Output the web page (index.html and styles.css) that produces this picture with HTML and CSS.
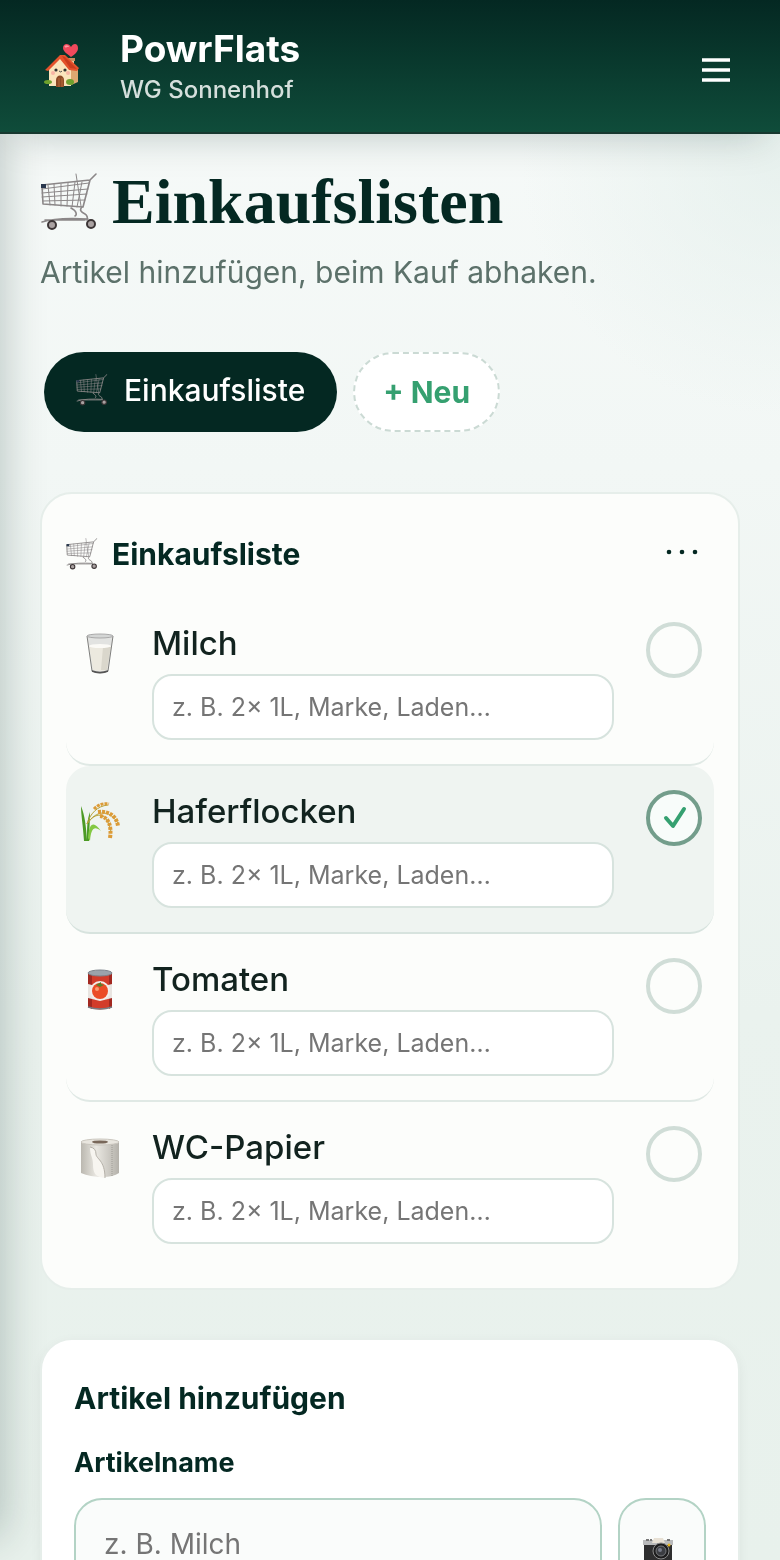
FILE: index.html
```html
<!DOCTYPE html>
<html lang="de">
<head>
    <meta charset="UTF-8">
    <meta name="viewport" content="width=device-width, initial-scale=1.0">
    <title>Einkaufslisten - PowrFlats</title>
    <link rel="stylesheet" href="styles.css">
</head>
<body>
    <svg class="sprite" aria-hidden="true">
        <symbol id="cart" viewBox="0 0 58 58">
            <g fill="none" stroke="#8b8788" stroke-linecap="round" stroke-linejoin="round">
                <path stroke-width="1" d="M2 16L49 10M2 20l46-4M2 24l45-3M3 28l42-1"/>
                <path stroke-width="1" d="M8 12l2 20M14 11l1 21M21 11v22M28 10l-1 23M35 9l-3 25M42 9l-5 25M36 1l5 32"/>
                <path stroke-width="1.6" d="M2 12L50 7 43 34 3 31zM50 7l6-6"/>
                <path stroke-width="1.6" d="M31 35c6 3 6 7 4 8M42 34c-3 3-1 5 3 7 2 1 3 4 2 6M2 49c12-4 28-4 46-3M5 47h40"/>
            </g>
            <rect x="1" y="11" width="5" height="4" fill="#28374d"/>
            <circle cx="12" cy="52" r="4" fill="#aaa2a2" stroke="#3c3536" stroke-width="2"/>
            <circle cx="51" cy="51" r="4" fill="#aaa2a2" stroke="#3c3536" stroke-width="2"/>
        </symbol>
    </svg>

    <nav class="drawer" aria-label="Menü"></nav>

    <header class="topbar">
        <svg class="logo" viewBox="0 0 36 44" aria-hidden="true">
            <path d="M25 16h5v10h-5z" fill="#edc397"/>
            <path d="M24 14h7v3h-7z" fill="#c88c5f"/>
            <path d="M27 13c-5-4-8-6-8-9 0-5 6-5 8-1 2-4 7-4 7 1 0 4-3 6-7 9z" fill="#f0495c"/>
            <path d="M21 3c1-1 3-1 3 0" stroke="#ff98a1" stroke-width="2" fill="none"/>
            <path d="M25 15l9 11v12l-9 4z" fill="#dfa871"/>
            <path d="M5 24L16 13l11 12v17H5z" fill="#fbe4bc"/>
            <path d="M1 26L16 11h5l14 13-2 3-8-1-9-11L4 27z" fill="#e4522c"/>
            <path d="M18 12l8 12 7 1-12-12z" fill="#c93c1e"/>
            <path d="M12 43v-7c0-6 8-6 8 0v7z" fill="#8d4a26"/>
            <path d="M15 43v-9M18 43v-9" stroke="#b76a38"/>
            <circle cx="12" cy="26" r="1.6" fill="#333"/><circle cx="21" cy="26" r="1.6" fill="#333"/>
            <circle cx="9" cy="29" r="2" fill="#f7b5a5"/><circle cx="24" cy="29" r="2" fill="#f7b5a5"/>
            <path d="M15 27q2 2 3 0" stroke="#555" fill="none"/>
            <ellipse cx="4" cy="38" rx="4" ry="2" fill="#6ea02d"/><ellipse cx="26" cy="38" rx="4" ry="3" fill="#6ea02d"/>
        </svg>
        <div class="brand">
            <div class="brand-name">PowrFlats</div>
            <div class="brand-sub">WG Sonnenhof</div>
        </div>
        <button class="menu-btn" type="button" aria-label="Menü öffnen">
            <svg viewBox="0 0 28 24" aria-hidden="true"><path d="M0 2h28M0 12h28M0 22h28" stroke="#fff" stroke-width="3.6"/></svg>
        </button>
    </header>

    <main>
        <h1><svg class="cart-lg" aria-hidden="true"><use href="#cart"/></svg>Einkaufslisten</h1>
        <p class="lead">Artikel hinzufügen, beim Kauf abhaken.</p>

        <div class="tabs">
            <button class="tab tab-active" type="button"><svg class="cart-sm" aria-hidden="true"><use href="#cart"/></svg>Einkaufsliste</button>
            <button class="tab tab-new" type="button">+ Neu</button>
        </div>

        <section class="card list-card">
            <div class="list-head">
                <svg class="cart-sm" aria-hidden="true"><use href="#cart"/></svg>
                <h2>Einkaufsliste</h2>
                <button class="more-btn" type="button" aria-label="Mehr">
                    <svg viewBox="0 0 32 6" fill="#042822" aria-hidden="true"><circle cx="3" cy="3" r="2.3"/><circle cx="16" cy="3" r="2.3"/><circle cx="29" cy="3" r="2.3"/></svg>
                </button>
            </div>

            <ul class="items">
                <li class="item">
                    <svg class="item-icon" viewBox="0 0 44 44" aria-hidden="true">
                        <path d="M9 4l5 36q8 3 16 0l5-36z" fill="#e2e3e1"/>
                        <path d="M11 14h22l-4 24q-7 2-14 0z" fill="#ece9df"/>
                        <path d="M25 15h8l-4 23h-6z" fill="#dad7cc"/>
                        <ellipse cx="22" cy="14" rx="11" ry="2" fill="#fbfaf6"/>
                        <path d="M9 4l5 35q8 4 16 0l5-35" fill="none" stroke="#80807e"/>
                        <path d="M14 39q8 3 16 0" fill="none" stroke="#555" stroke-width="1.5"/>
                        <ellipse cx="22" cy="4" rx="13" ry="2" fill="#d4d6d5" stroke="#aaa"/>
                    </svg>
                    <div class="item-body">
                        <label class="item-name" for="note-milch">Milch</label>
                        <input class="note" id="note-milch" type="text" placeholder="z. B. 2× 1L, Marke, Laden…">
                    </div>
                    <label class="check">
                        <input type="checkbox" aria-label="Milch erledigt">
                        <svg viewBox="0 0 56 56" aria-hidden="true"><path d="M20 28l7 8 11-17"/></svg>
                    </label>
                </li>
                <li class="item item-done">
                    <svg class="item-icon" viewBox="0 0 44 44" aria-hidden="true">
                        <path d="M6 41C5 25 3 15 3 6c4 10 5 20 6 34 0-12 0-20 3-28 0 10-1 20-1 29z" fill="#4c9a25"/>
                        <path d="M10 38c1-16 6-17 13-7-7-6-10-2-11 10z" fill="#83c842"/>
                        <g fill="none" stroke="#b6a137"><path d="M9 24C12 14 19 6 30 5M9 24C18 10 31 9 40 23M9 24c8-12 20-14 24 8"/></g>
                        <g fill="none" stroke="#dc9b37" stroke-dasharray="3 1">
                            <path stroke-width="3" d="M16 9c4-4 8-6 15-5"/>
                            <path stroke-width="4" d="M20 12c9-1 18 2 20 14"/>
                            <path stroke-width="4" d="M22 16c8 1 12 9 10 22"/>
                        </g>
                    </svg>
                    <div class="item-body">
                        <label class="item-name" for="note-hafer">Haferflocken</label>
                        <input class="note" id="note-hafer" type="text" placeholder="z. B. 2× 1L, Marke, Laden…">
                    </div>
                    <label class="check">
                        <input type="checkbox" aria-label="Haferflocken erledigt" checked>
                        <svg viewBox="0 0 56 56" aria-hidden="true"><path d="M20 28l7 8 11-17"/></svg>
                    </label>
                </li>
                <li class="item">
                    <svg class="item-icon" viewBox="0 0 44 44" aria-hidden="true">
                        <path d="M10 5v34q12 5 24 0V5z" fill="#d23c2b"/>
                        <path d="M10 5h4v36l-4-2zM31 5h3v34l-3 2z" fill="#a32820"/>
                        <path d="M10 16q12 4 24 0v14q-12 4-24 0z" fill="#e9e5e1"/>
                        <circle cx="22" cy="23" r="10" fill="#f3eeea"/>
                        <circle cx="22" cy="23" r="8" fill="#eb4c26"/>
                        <circle cx="19" cy="21" r="2" fill="#f99a70"/>
                        <path d="M18 17l4 2 4-2-3-1v-2z" fill="#5b7d28"/>
                        <path d="M10 39q12 4 24 0" fill="none" stroke="#777c84" stroke-width="1.5"/>
                        <ellipse cx="22" cy="5" rx="12" ry="3" fill="#9ba3ab" stroke="#7d838b"/>
                    </svg>
                    <div class="item-body">
                        <label class="item-name" for="note-tomaten">Tomaten</label>
                        <input class="note" id="note-tomaten" type="text" placeholder="z. B. 2× 1L, Marke, Laden…">
                    </div>
                    <label class="check">
                        <input type="checkbox" aria-label="Tomaten erledigt">
                        <svg viewBox="0 0 56 56" aria-hidden="true"><path d="M20 28l7 8 11-17"/></svg>
                    </label>
                </li>
                <li class="item">
                    <svg class="item-icon" viewBox="0 0 44 44" aria-hidden="true">
                        <defs><linearGradient id="roll"><stop stop-color="#bbb8b0"/><stop offset=".4" stop-color="#e9e7e1"/><stop offset="1" stop-color="#b5b2ab"/></linearGradient></defs>
                        <path d="M3 6v31q9 4 22 4 10 0 16-4V6z" fill="url(#roll)"/>
                        <path d="M34 9v31" stroke="#a09d96" stroke-dasharray="1 1"/>
                        <ellipse cx="22" cy="6" rx="19" ry="3" fill="#e9e6df" stroke="#cac6be"/>
                        <ellipse cx="22" cy="6" rx="8" ry="1.6" fill="#79685a"/>
                        <path d="M12 11q6 1 6 7c0 5 9 6 9 24-10-1-12-5-12-14 0-7-3-8-3-17z" fill="#f7f5f0"/>
                        <path d="M12 11q6 1 6 7c0 5 9 6 9 24" fill="none" stroke="#b5b1a9"/>
                    </svg>
                    <div class="item-body">
                        <label class="item-name" for="note-papier">WC-Papier</label>
                        <input class="note" id="note-papier" type="text" placeholder="z. B. 2× 1L, Marke, Laden…">
                    </div>
                    <label class="check">
                        <input type="checkbox" aria-label="WC-Papier erledigt">
                        <svg viewBox="0 0 56 56" aria-hidden="true"><path d="M20 28l7 8 11-17"/></svg>
                    </label>
                </li>
            </ul>
        </section>

        <section class="card add-card">
            <h2>Artikel hinzufügen</h2>
            <label class="field-label" for="article">Artikelname</label>
            <div class="field-row">
                <input class="field" id="article" type="text" placeholder="z. B. Milch">
                <button class="photo-btn" type="button" aria-label="Foto aufnehmen">
                    <svg viewBox="0 0 32 28" aria-hidden="true">
                        <path d="M2 3h28v22H2z" fill="#2e2e2f"/>
                        <path d="M1 3h30v5H1z" fill="#b9babb"/>
                        <path d="M12 1h9l2 5H10z" fill="#e8e1d5"/>
                        <path d="M4 2h3v2H4zM8 2h2v2H8zM25 2h3v2h-3z" fill="#777"/>
                        <circle cx="19" cy="14" r="8" fill="#1c1c1d" stroke="#8a8a8a"/>
                        <circle cx="19" cy="14" r="5" fill="#3b3d42" stroke="#77797c"/>
                        <circle cx="18" cy="13" r="2" fill="#777b88"/>
                        <circle cx="27" cy="8" r="1.5" fill="#e6b422"/>
                    </svg>
                </button>
            </div>
        </section>
    </main>
</body>
</html>
```
FILE: styles.css
```css
* {
    box-sizing: border-box;
}
body {
    margin: 0;
    height: 100vh;
    overflow: hidden;
    font-family: Inter, "Liberation Sans", sans-serif;
    color: #042822;
    background:
        radial-gradient(circle at 100% 10%, rgba(226, 238, 234, 0.7), transparent 260px),
        linear-gradient(#f7faf9, #f2f7f5 30%, #eaf2ee 65%, #e8f1ec);
}
h1, h2, p, ul {
    margin: 0;
    padding: 0;
}
button, input {
    font-family: inherit;
}
button {
    cursor: pointer;
}
svg {
    display: block;
    flex-shrink: 0;
}
.sprite {
    display: none;
}

/* closed side menu, only its shadow reaches the page */
.drawer {
    position: fixed;
    top: 0;
    bottom: 24px;
    left: -300px;
    width: 300px;
    box-shadow: 4px 0 40px rgba(4, 40, 34, 0.24);
}

.topbar {
    position: relative;
    display: flex;
    align-items: center;
    height: 134px;
    padding: 0 50px 0 44px;
    background: linear-gradient(#042822, #0f4c3a);
    border-bottom: 2px solid #17382f;
    box-shadow: 0 16px 40px -16px rgba(4, 40, 34, 0.25);
}
.logo {
    width: 36px;
    height: 44px;
}
.brand {
    flex: 1;
    margin-left: 40px;
}
.brand-name {
    font-size: 37px;
    line-height: 48px;
    font-weight: 700;
    color: #fff;
}
.brand-sub {
    font-size: 24px;
    line-height: 34px;
    font-weight: 500;
    color: #d5dfdc;
}
.menu-btn {
    padding: 8px 0 0;
    border: none;
    background: none;
}
.menu-btn svg {
    width: 28px;
    height: 24px;
}

main {
    position: relative;
    padding: 32px 40px;
}
h1 {
    display: flex;
    align-items: center;
    gap: 14px;
    font-family: "Liberation Serif", serif;
    font-size: 64px;
    line-height: 72px;
}
.cart-lg {
    width: 58px;
    height: 58px;
}
.lead {
    margin-top: 14px;
    font-size: 30px;
    line-height: 40px;
    color: #5c716a;
}

.tabs {
    display: flex;
    gap: 16px;
    margin: 60px 4px;
}
.tab {
    display: flex;
    align-items: center;
    height: 80px;
    border-radius: 40px;
    font-size: 30px;
}
.tab-active {
    gap: 16px;
    padding: 0 32px 4px;
    border: none;
    background: #042822;
    color: #fff;
    font-weight: 500;
}
.tab-new {
    padding: 0 28px;
    border: 2px dashed #cbdad4;
    background: #fff;
    color: #35a070;
    font-weight: 700;
}
.cart-sm {
    width: 32px;
    height: 32px;
}

.card {
    border: 2px solid #e6eeea;
    border-radius: 32px;
}
.list-card {
    padding: 24px 24px 20px;
    background: #fcfdfb;
}
.list-head {
    display: flex;
    align-items: center;
    gap: 14px;
    height: 72px;
    margin-bottom: 8px;
}
h2 {
    flex: 1;
    font-size: 30px;
    line-height: 40px;
    font-weight: 700;
}
.more-btn {
    padding: 16px 16px 20px;
    border: none;
    background: none;
}
.more-btn svg {
    width: 32px;
    height: 6px;
}

.items {
    list-style: none;
}
.item {
    display: flex;
    align-items: flex-start;
    padding: 24px 12px;
    border-bottom: 2px solid #e0e9e5;
    border-radius: 24px;
}
.item:last-child {
    border-bottom: none;
}
.item-done {
    background: #eff4f1;
    border-bottom-color: #d7e3de;
}
.item-icon {
    width: 44px;
    height: 44px;
    margin-top: 10px;
}
.item-body {
    flex: 1;
    margin: 0 32px 0 30px;
}
.item-name {
    display: block;
    font-size: 33px;
    line-height: 42px;
    margin-bottom: 10px;
    font-weight: 500;
    color: #12231f;
}
.note {
    display: block;
    width: 100%;
    height: 66px;
    padding: 0 18px;
    border: 2px solid #d7e3de;
    border-radius: 20px;
    background: #fff;
    font-size: 25px;
}
.note::placeholder, .field::placeholder {
    color: #757575;
}

.check {
    display: grid;
    width: 56px;
    height: 56px;
    cursor: pointer;
}
.check input, .check svg {
    grid-area: 1 / 1;
    width: 56px;
    height: 56px;
}
.check input {
    appearance: none;
    margin: 0;
    border: 4px solid #d0ddd7;
    border-radius: 50%;
}
.check svg {
    visibility: hidden;
    pointer-events: none;
    fill: none;
    stroke: #35a070;
    stroke-width: 4;
    stroke-linecap: round;
    stroke-linejoin: round;
}
.check input:checked {
    border-color: #739d8b;
    background: #f8fcfa;
}
.check input:checked + svg {
    visibility: visible;
}

.add-card {
    margin-top: 48px;
    padding: 38px 32px;
    background: #fff;
    box-shadow: 0 4px 12px rgba(4, 40, 34, 0.05);
}
.field-label {
    display: block;
    margin: 28px 0 18px;
    font-size: 27px;
    line-height: 34px;
    font-weight: 700;
}
.field-row {
    display: flex;
    gap: 16px;
}
.field, .photo-btn {
    height: 92px;
    border: 2px solid #b3d3c5;
    border-radius: 28px;
    background: #fafcfb;
}
.field {
    flex: 1;
    min-width: 0;
    padding: 0 28px;
    font-size: 28px;
}
.photo-btn {
    display: flex;
    align-items: center;
    justify-content: center;
    width: 88px;
    padding: 14px 0 0;
}
.photo-btn svg {
    width: 32px;
    height: 28px;
    margin-right: 8px;
}
```
